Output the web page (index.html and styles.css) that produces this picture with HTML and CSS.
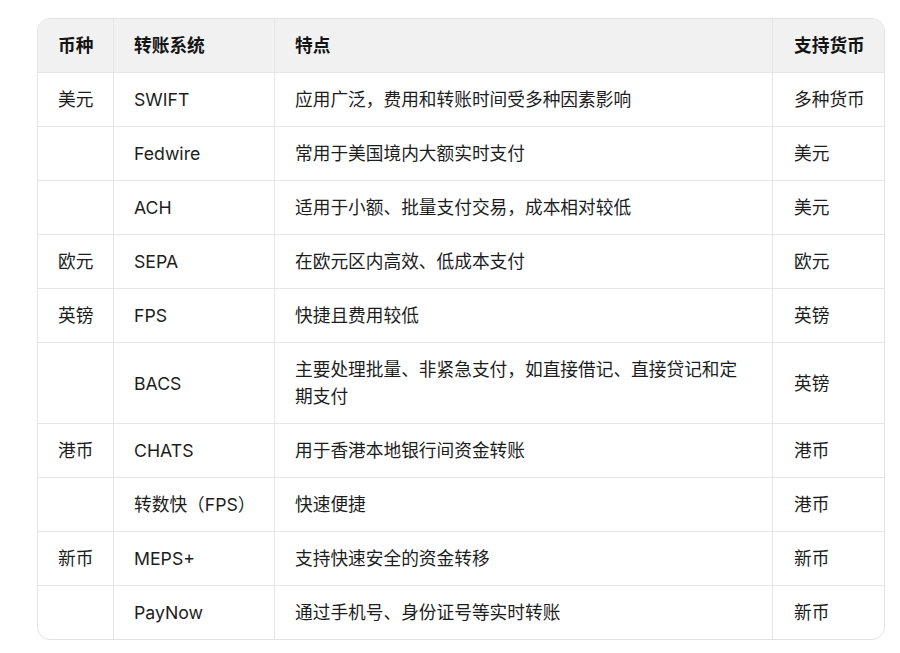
FILE: index.html
```html
<!DOCTYPE html>
<html lang="zh-CN">
<head>
<meta charset="utf-8">
<title>转账系统</title>
<link rel="stylesheet" href="styles.css">
</head>
<body>
<div class="page">
  <div class="table-wrap">
    <table class="grid">
      <colgroup>
        <col class="c1"><col class="c2"><col class="c3"><col class="c4">
      </colgroup>
      <thead>
        <tr><th>币种</th><th>转账系统</th><th class="feat">特点</th><th>支持货币</th></tr>
      </thead>
      <tbody>
        <tr><td>美元</td><td>SWIFT</td><td class="feat">应用广泛，费用和转账时间受多种因素影响</td><td>多种货币</td></tr>
        <tr><td></td><td>Fedwire</td><td class="feat">常用于美国境内大额实时支付</td><td>美元</td></tr>
        <tr><td></td><td>ACH</td><td class="feat">适用于小额、批量支付交易，成本相对较低</td><td>美元</td></tr>
        <tr><td>欧元</td><td>SEPA</td><td class="feat">在欧元区内高效、低成本支付</td><td>欧元</td></tr>
        <tr><td>英镑</td><td>FPS</td><td class="feat">快捷且费用较低</td><td>英镑</td></tr>
        <tr><td></td><td>BACS</td><td class="feat">主要处理批量、非紧急支付，如直接借记、直接贷记和定期支付</td><td>英镑</td></tr>
        <tr><td>港币</td><td>CHATS</td><td class="feat">用于香港本地银行间资金转账</td><td>港币</td></tr>
        <tr><td></td><td>转数快（FPS）</td><td class="feat">快速便捷</td><td>港币</td></tr>
        <tr><td>新币</td><td>MEPS+</td><td class="feat">支持快速安全的资金转移</td><td>新币</td></tr>
        <tr><td></td><td>PayNow</td><td class="feat">通过手机号、身份证号等实时转账</td><td>新币</td></tr>
      </tbody>
    </table>
  </div>
</div>
</body>
</html>
```

FILE: styles.css
```css
html, body {
  margin: 0;
  padding: 0;
  background: #ffffff;
}
.page {
  padding: 18px 0 0 37px;
  font-family: "Inter", "Noto Sans CJK SC", sans-serif;
  color: #1d1d1d;
}
.table-wrap {
  width: 846px;
  border: 1px solid #e3e3e3;
  border-radius: 13px;
  overflow: hidden;
}
.grid {
  width: 100%;
  border-collapse: separate;
  border-spacing: 0;
  table-layout: fixed;
  font-size: 17.7px;
  line-height: 27px;
}
.c1 { width: 76px; }
.c2 { width: 161px; }
.c3 { width: 498px; }
.c4 { width: 111px; }
.grid th, .grid td {
  text-align: left;
  vertical-align: middle;
  padding: 13px 8px 13px 20px;
  border-right: 1px solid #e6e6e6;
  border-bottom: 1px solid #e6e6e6;
  font-weight: 400;
  white-space: nowrap;
}
.grid .feat {
  white-space: normal;
  padding-right: 24px;
}
.grid th:last-child, .grid td:last-child {
  border-right: none;
  padding-left: 21px;
}
.grid tbody tr:last-child td {
  border-bottom: none;
}
.grid thead th {
  background: #f1f1f1;
  font-weight: 600;
  color: #141414;
}
```
